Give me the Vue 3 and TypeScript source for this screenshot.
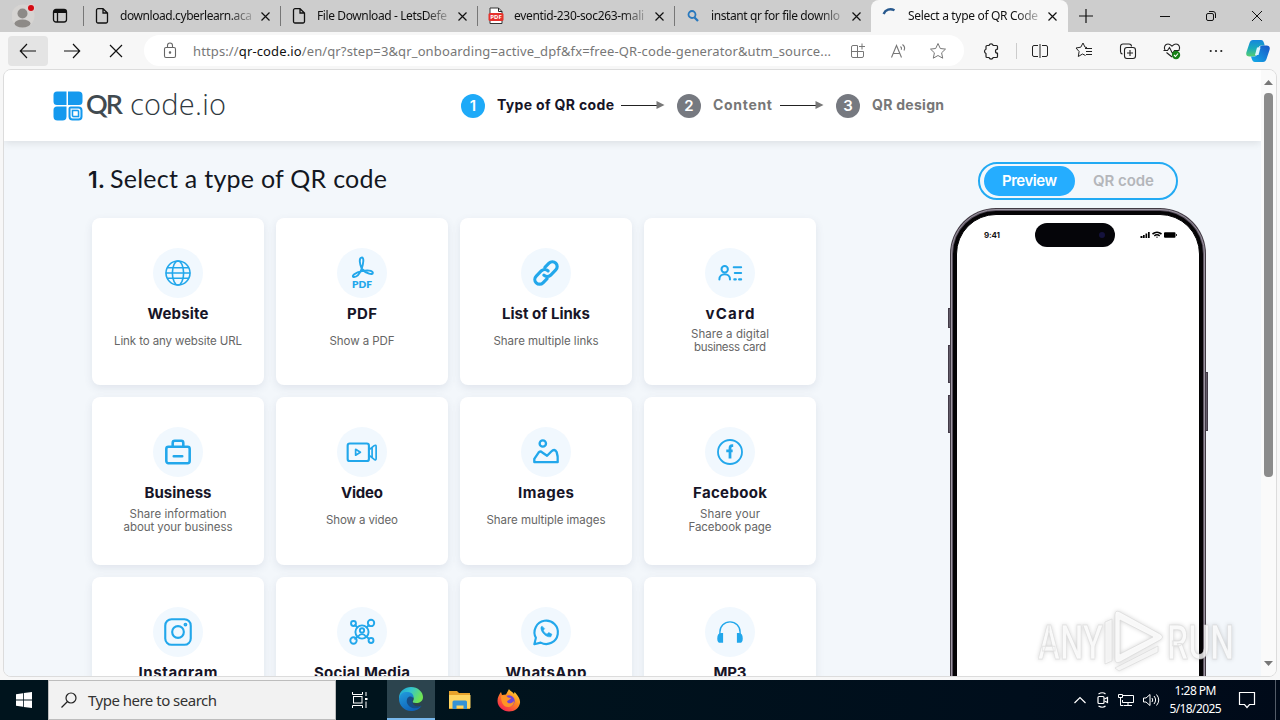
<script setup lang="ts">
import type { Directive } from 'vue'

interface Tab {
  title: string
  width: number
  icon: 'page' | 'pdf' | 'search' | 'spinner'
  active?: boolean
}

interface QrType {
  name: string
  nameWidth: number
  lines: { text: string; width: number }[]
  icon: string
}

// Tracks a label so that it takes up exactly the given width.
const vFit: Directive<HTMLElement, number> = {
  mounted(el, { value }) {
    const count = (el.textContent ?? '').length
    const natural = el.getBoundingClientRect().width
    const spacing = (value - natural) / Math.max(1, count - 1)
    el.style.letterSpacing = `${spacing}px`
    el.style.marginRight = `${-spacing}px`
  },
}

const tabs: Tab[] = [
  { title: 'download.cyberlearn.aca', width: 132, icon: 'page' },
  { title: 'File Download - LetsDefe', width: 130, icon: 'page' },
  { title: 'eventid-230-soc263-mali', width: 130, icon: 'pdf' },
  { title: 'instant qr for file downlo', width: 129, icon: 'search' },
  { title: 'Select a type of QR Code', width: 130, icon: 'spinner', active: true },
]

const types: QrType[] = [
  { name: 'Website', nameWidth: 61, lines: [{ text: 'Link to any website URL', width: 128 }], icon: 'globe' },
  { name: 'PDF', nameWidth: 30, lines: [{ text: 'Show a PDF', width: 65 }], icon: 'pdf' },
  { name: 'List of Links', nameWidth: 88, lines: [{ text: 'Share multiple links', width: 105 }], icon: 'link' },
  { name: 'vCard', nameWidth: 49, lines: [{ text: 'Share a digital', width: 78 }, { text: 'business card', width: 72 }], icon: 'vcard' },
  { name: 'Business', nameWidth: 67, lines: [{ text: 'Share information', width: 97 }, { text: 'about your business', width: 109 }], icon: 'business' },
  { name: 'Video', nameWidth: 42, lines: [{ text: 'Show a video', width: 72 }], icon: 'video' },
  { name: 'Images', nameWidth: 56, lines: [{ text: 'Share multiple images', width: 119 }], icon: 'images' },
  { name: 'Facebook', nameWidth: 74, lines: [{ text: 'Share your', width: 60 }, { text: 'Facebook page', width: 83 }], icon: 'facebook' },
  { name: 'Instagram', nameWidth: 79, lines: [], icon: 'instagram' },
  { name: 'Social Media', nameWidth: 96, lines: [], icon: 'social' },
  { name: 'WhatsApp', nameWidth: 81, lines: [], icon: 'whatsapp' },
  { name: 'MP3', nameWidth: 33, lines: [], icon: 'mp3' },
]
</script>

<template>
  <div class="desktop">
    <header class="tabbar">
      <div class="profile">
        <svg width="24" height="28" viewBox="0 0 24 28">
          <circle cx="11" cy="15" r="11.5" fill="#d6d4d2" />
          <circle cx="10.500" cy="12.500" r="5" fill="#8d8a87" />
          <ellipse cx="10.500" cy="22.500" rx="8" ry="4" fill="#8d8a87" />
          <circle cx="19" cy="7" r="4" fill="#e2cfcf" />
          <circle cx="19" cy="7" r="3" fill="#d40a12" />
        </svg>
      </div>
      <div class="workspaces">
        <svg width="16" height="16" viewBox="0 0 16 16" fill="none" stroke="#111" stroke-width="1.3">
          <rect x="1.500" y="1.500" width="13" height="12.500" rx="2.500" />
          <path d="M2 3.500h12" stroke-width="3" />
          <path d="M5.500 4v10" />
        </svg>
      </div>
      <div v-for="tab in tabs" :key="tab.title" class="tab" :class="{ active: tab.active }">
        <span class="tab-icon">
          <svg v-if="tab.icon === 'page'" width="14" height="18" viewBox="0 0 14 18" fill="none" stroke="#111" stroke-width="1.3">
            <path d="M3 1.700h5L12.500 6v8.500a1.500 1.500 0 0 1-1.500 1.500H3a1.500 1.500 0 0 1-1.500-1.500V3.200A1.500 1.500 0 0 1 3 1.700zM8 1.700V6h4.500" />
          </svg>
          <svg v-else-if="tab.icon === 'pdf'" class="pdf-tab" width="16" height="18" viewBox="0 0 16 18">
            <path d="M2 1h8.500L14 4.500V16.500H2z" fill="#fff" stroke="#333" />
            <path d="M10.500 1v3.500H14" fill="none" stroke="#222" />
            <rect x="0.500" y="6" width="15" height="8" rx="1.500" fill="#e5322d" />
            <text x="8" y="12.200" text-anchor="middle" font-size="6" font-weight="700" fill="#fff">PDF</text>
          </svg>
          <svg v-else-if="tab.icon === 'search'" width="14" height="16" viewBox="0 0 14 16" fill="none" stroke="#2878bd">
            <circle cx="6" cy="6.500" r="3.500" stroke-width="1.800" />
            <path d="M8.500 9.500l3.500 3.500" stroke-width="2.300" />
          </svg>
          <svg v-else width="16" height="16" viewBox="0 0 16 16" fill="none" stroke="#28598e" stroke-width="2.400">
            <path d="M1.600 6C3.500 1.500 8 0 12.500 2.300" />
          </svg>
        </span>
        <span class="tab-title"><span v-fit="tab.width" class="fit">{{ tab.title }}</span></span>
        <svg class="tab-close" width="9" height="9" viewBox="0 0 9 9" stroke="#111" stroke-width="1.200">
          <path d="M.500 .500l8 8M8.500 .500l-8 8" />
        </svg>
      </div>
      <svg class="new-tab" width="14" height="14" viewBox="0 0 14 14" stroke="#111" stroke-width="1.200"><path d="M7 0v14M0 7h14" /></svg>
      <div class="window-buttons">
        <svg width="12" height="12" viewBox="0 0 12 12" stroke="#111"><path d="M1 6.500h10" /></svg>
        <svg width="12" height="12" viewBox="0 0 12 12" fill="none" stroke="#111">
          <rect x="1.500" y="3.500" width="7" height="7" rx="1.500" /><path d="M4 1.500h4a2.500 2.500 0 0 1 2.500 2.500v4" />
        </svg>
        <svg width="12" height="12" viewBox="0 0 12 12" stroke="#111"><path d="M1 1l10 10M11 1L1 11" /></svg>
      </div>
    </header>

    <nav class="toolbar">
      <button class="nav back">
        <svg width="18" height="16" viewBox="0 0 18 16" fill="none" stroke="#111" stroke-width="1.200"><path d="M17 8H1.500M8 1L1.300 8 8 15" /></svg>
      </button>
      <button class="nav">
        <svg width="18" height="16" viewBox="0 0 18 16" fill="none" stroke="#111" stroke-width="1.200"><path d="M1 8h15.500M10 1l6.700 7L10 15" /></svg>
      </button>
      <button class="nav">
        <svg width="14" height="14" viewBox="0 0 14 14" stroke="#111" stroke-width="1.200"><path d="M1 1l12 12M13 1L1 13" /></svg>
      </button>
      <div class="address">
        <svg class="lock" width="14" height="17" viewBox="0 0 14 17" fill="none" stroke="#666" stroke-width="1.100">
          <rect x="1.500" y="5.500" width="11" height="10" rx="1.500" /><path d="M4.500 5.500V3.500a2.500 2.500 0 0 1 5 0v2" /><circle cx="7" cy="10.500" r=".700" fill="#444" />
        </svg>
        <div class="url"><span v-fit="638" class="fit">https://<b>qr-code.io</b>/en/qr?step=3&amp;qr_onboarding=active_dpf&amp;fx=free-QR-code-generator&amp;utm_source...</span></div>
        <div class="address-icons">
          <svg width="16" height="16" viewBox="0 0 16 16" fill="none" stroke="#777">
            <path d="M7.500 2.500H3A1.500 1.500 0 0 0 1.500 4v9A1.500 1.500 0 0 0 3 14.500h9A1.500 1.500 0 0 0 13.500 13V8.500H1.500M7.500 2.500v12M12 .500v6M9 3.500h6" />
          </svg>
          <svg width="18" height="16" viewBox="0 0 18 16" fill="none" stroke="#777" stroke-width="1.100">
            <path d="M1.500 14.500L6.500 2.500l5 12M3 10.500h7M10.500 3.500c1 .800 1.300 2 .800 3.300M12.500 1.500c2 1.500 2.500 4 1.500 6" />
          </svg>
          <svg width="18" height="18" viewBox="0 0 18 18" fill="none" stroke="#777"><path d="M9 1.500l2.300 5 5.200.600-3.900 3.700 1.100 5.400L9 13.500l-4.700 2.700 1.100-5.400L1.500 7.100l5.200-.600z" /></svg>
        </div>
      </div>
      <div class="tool">
        <svg width="18" height="18" viewBox="0 0 18 18" fill="none" stroke="#222" stroke-width="1.200" stroke-linejoin="round">
          <path d="M6 3.500a2.200 2.200 0 0 1 4.200 0h3.300q1 0 1 1v2.700a2 2 0 0 0 0 4v3.300q0 1-1 1h-3.300a2.200 2.200 0 0 1-4.200 0H4q-1 0-1-1v-3a2.300 2.300 0 0 1 0-4.300V4.500q0-1 1-1z" />
        </svg>
      </div>
      <span class="divider"></span>
      <div class="tool">
        <svg width="16" height="16" viewBox="0 0 16 16" fill="none" stroke="#222"><path d="M6 2.500H2A1.500 1.500 0 0 0 .500 4v8A1.500 1.500 0 0 0 2 13.500h4M10 2.500h4A1.500 1.500 0 0 1 15.500 4v8a1.500 1.500 0 0 1-1.500 1.500h-4M8 1v14" /></svg>
      </div>
      <div class="tool">
        <svg width="18" height="18" viewBox="0 0 18 18" fill="none" stroke="#222"><path d="M10.500 13.500l-3-1.500-4.200 2.500.800-5L1 6l4.800-.800L8 1l2 4.200 2 .300M10 6.500h7M11 9.500h6M11 12.500h6" /></svg>
      </div>
      <div class="tool">
        <svg width="18" height="18" viewBox="0 0 18 18" fill="none" stroke="#222" stroke-width="1.100">
          <path d="M3.500 12A2.500 2.500 0 0 1 1.500 9.500v-5A2.500 2.500 0 0 1 4 2h6a2.500 2.500 0 0 1 2.500 2.500" /><rect x="5.500" y="5.500" width="11" height="11" rx="2.500" /><path d="M11 8v6M8 11h6" />
        </svg>
      </div>
      <div class="tool">
        <svg width="18" height="18" viewBox="0 0 18 18" fill="none" stroke="#222" stroke-width="1.100">
          <path d="M2 8C.500 5.500 2 2 5 2c2 0 3 1.200 4 2.200C10 3.200 11 2 13 2c3 0 4.500 3.500 3 6M.500 8.500h4l2-3 3 6 2-3h5M3.500 10.500L9 15" />
          <circle cx="13" cy="13" r="4.200" fill="#168016" stroke="none" /><path d="M11 13l1.500 1.500 2.500-3" stroke="#fff" />
        </svg>
      </div>
      <div class="tool">
        <svg width="14" height="4" viewBox="0 0 14 4" fill="#222"><circle cx="1.700" cy="2" r="1.100" /><circle cx="7" cy="2" r="1.100" /><circle cx="12.300" cy="2" r="1.100" /></svg>
      </div>
      <div class="tool copilot">
        <svg width="24" height="24" viewBox="0 0 24 24">
          <defs>
            <linearGradient id="cop-a" x1="0" y1="0" x2="0" y2="1"><stop offset="0" stop-color="#1686de" /><stop offset=".500" stop-color="#19aabc" /><stop offset="1" stop-color="#58ce70" /></linearGradient>
            <linearGradient id="cop-b" x1="0" y1="1" x2="1" y2="0"><stop offset="0" stop-color="#12aee8" /><stop offset="1" stop-color="#1955c7" /></linearGradient>
          </defs>
          <path d="M7 1h8c2 0 2.500 1.500 3 3l.700 2.500h-3c-2 0-3 1-3.600 3L10.500 15c-.600 1.700-1.500 2.500-3 2.500H3.500C.500 17.500-.300 15.500.500 13L3.500 4C4.200 2 5.200 1 7 1z" fill="url(#cop-a)" />
          <path d="M17 23H9c-2 0-2.700-1.500-3.200-3L5 17.500h3c2 0 3-1 3.600-3L13.500 9c.600-1.700 1.500-2.500 3-2.500h4c3 0 3.800 2 3 4.500l-3 9c-.700 2-1.700 3-3.500 3z" fill="url(#cop-b)" />
          <path d="M11 8.500h3.500L12.500 16H9z" fill="#dff5ff" />
        </svg>
      </div>
    </nav>

    <main class="frame">
      <div class="page">
        <div class="site-header">
          <div class="logo">
            <svg width="30" height="30" viewBox="0 0 30 30">
              <path d="M4 .500h9.500V14H4a3.500 3.500 0 0 1-3.500-3.500V4A3.500 3.500 0 0 1 4 .500zM15 .500h10.500A4 4 0 0 1 29.500 4.500v6A3.500 3.500 0 0 1 26 14H15zM4 15.500h9.500v10a4 4 0 0 1-4 4H4.500a4 4 0 0 1-4-4V19A3.500 3.500 0 0 1 4 15.500z" fill="#1499ee" />
              <path d="M17.500 16.500h8a3 3 0 0 1 3 3v6a3 3 0 0 1-3 3h-6a3 3 0 0 1-3-3v-8a1 1 0 0 1 1-1z" fill="#e6f5ff" stroke="#1499ee" stroke-width="2" />
              <path d="M19.500 19.500h5a1 1 0 0 1 1 1v5h-5a1 1 0 0 1-1-1z" fill="#fff" stroke="#1499ee" stroke-width="1.500" />
            </svg>
            <span v-fit="37" class="fit logo-strong">QR</span>
            <span v-fit="96" class="fit logo-light">code.io</span>
          </div>
          <div class="steps">
            <span class="step-no current">1</span><span class="step-name s1"><span v-fit="117" class="fit">Type of QR code</span></span>
            <svg class="arrow" width="44" height="10" viewBox="0 0 44 10"><path d="M0 5.500h37" stroke="#222" /><path d="M35.500 1v8L43.500 5z" fill="#777" /></svg>
            <span class="step-no">2</span><span class="step-name s2"><span v-fit="59" class="fit">Content</span></span>
            <svg class="arrow" width="44" height="10" viewBox="0 0 44 10"><path d="M0 5.500h37" stroke="#222" /><path d="M35.500 1v8L43.500 5z" fill="#777" /></svg>
            <span class="step-no">3</span><span class="step-name"><span v-fit="72" class="fit">QR design</span></span>
          </div>
        </div>

        <div class="body">
          <section class="chooser">
            <h1><b>1.</b><span v-fit="277" class="fit">Select a type of QR code</span></h1>
            <div class="grid">
              <article v-for="item in types" :key="item.name" class="card">
                <div class="bubble">
                  <svg width="32" height="32" viewBox="0 0 32 32" fill="none" stroke="#22a7eb" stroke-width="1.700" stroke-linecap="round" stroke-linejoin="round">
                    <g v-if="item.icon === 'globe'" stroke-width="1.500">
                      <circle cx="16" cy="16" r="11.300" /><ellipse cx="16" cy="16" rx="5.300" ry="11.300" /><path d="M5 16h22M6.500 11h19M6.500 21h19" />
                    </g>
                    <g v-else-if="item.icon === 'pdf'">
                      <path d="M15.700 12C14 8 12.800 2 15.500 1.500c2.800-.500 1.800 5.500.200 10.500-1.500 4-4.500 8-7.500 7.800-2.800-.800 1.500-4.300 7.800-5.600 5-1 9.800-.700 10.200 1.600.200 2.500-6.200 1-10.500-3.800z" stroke-width="1.800" />
                      <text x="16" y="30.500" text-anchor="middle" font-size="9.500" font-weight="800" fill="#22a7eb" stroke="none">PDF</text>
                    </g>
                    <g v-else-if="item.icon === 'link'" transform="rotate(-45 16 16)" stroke-width="3">
                      <path d="M13 20.500H7.500a4.500 4.500 0 0 1 0-9h7a4.500 4.500 0 0 1 4.300 4.500M19 11.500h5.500a4.500 4.500 0 0 1 0 9h-7a4.500 4.500 0 0 1-4.300-4.500" />
                    </g>
                    <g v-else-if="item.icon === 'vcard'" stroke-width="1.900">
                      <circle cx="11" cy="12.500" r="3" /><path d="M6 22c0-6.500 10-6.500 10 0M19.500 10.500h7M20.500 16h6M20 22h1.500M24.500 22h2" />
                    </g>
                    <g v-else-if="item.icon === 'business'" stroke-width="2.400">
                      <rect x="5" y="11" width="22" height="15.500" rx="2" /><path d="M11 11V7.500a2 2 0 0 1 2-2h6a2 2 0 0 1 2 2v3.500M12 20h8" />
                    </g>
                    <g v-else-if="item.icon === 'video'" stroke-width="2">
                      <rect x="2.500" y="8" width="20" height="16.500" rx="2" /><path d="M22.500 14l5-4q1.800-1 1.800 1v11q0 2-1.800 1l-5-4M25.500 12v9M10 13.500v5.500l4.500-2.800z" stroke-width="1.600" />
                    </g>
                    <g v-else-if="item.icon === 'images'" stroke-width="2.200">
                      <circle cx="13" cy="8" r="3" /><path d="M5 25.500v-3l4-6q1.500-2 3.500 0l4.500 3 4-4q3-3 5 .500 1.500 4 1 9.500z" />
                    </g>
                    <g v-else-if="item.icon === 'facebook'">
                      <circle cx="16" cy="16" r="11.300" /><path d="M19 10h-1q-2 0-2 2.500V22M12.500 15h6" stroke-width="2.600" stroke-linecap="butt" />
                    </g>
                    <g v-else-if="item.icon === 'instagram'" stroke-width="2">
                      <rect x="4" y="4" width="24" height="24" rx="6" /><circle cx="16" cy="16" r="5.500" /><circle cx="23" cy="9" r=".800" />
                    </g>
                    <g v-else-if="item.icon === 'social'" stroke-width="1.800">
                      <circle cx="16" cy="16" r="6.200" /><circle cx="16" cy="14.500" r="2" /><path d="M12 20.500q4-5 8 0M9.500 9.500l2 2M22.500 9.500l-2 2M9.500 22.500l2-2M22.500 22.500l-2-2" />
                      <circle cx="8" cy="8" r="2.300" /><circle cx="24.500" cy="7.500" r="3" /><circle cx="8" cy="24" r="3" /><circle cx="24.500" cy="24" r="2.300" />
                    </g>
                    <g v-else-if="item.icon === 'whatsapp'" stroke-width="2">
                      <path d="M5 27.500l1.500-6A11 11 0 1 1 11 26z" /><path d="M12 10.500c-3 2 2.500 11 8.500 10l1-2.500-3-1.500-1.500 1.500c-2-1-3-2-3.500-3.500l1-1.500z" fill="#22a7eb" stroke-width=".600" />
                    </g>
                    <g v-else>
                      <path d="M6.500 20v-4a9.500 9.500 0 0 1 19 0v4" stroke-width="1.300" /><path d="M8 17q-4 0-4 5t4 4h1.500v-9zM24 17q4 0 4 5t-4 4h-1.500v-9z" fill="#22a7eb" stroke="none" />
                    </g>
                  </svg>
                </div>
                <h2><span v-fit="item.nameWidth" class="fit">{{ item.name }}</span></h2>
                <div class="desc">
                  <div v-for="line in item.lines" :key="line.text"><span v-fit="line.width" class="fit">{{ line.text }}</span></div>
                </div>
              </article>
            </div>
          </section>

          <aside class="preview">
            <div class="toggle">
              <span class="toggle-on"><span v-fit="55" class="fit">Preview</span></span>
              <span class="toggle-off"><span v-fit="61" class="fit">QR code</span></span>
            </div>
            <div class="phone">
              <i class="key k1"></i><i class="key k2"></i><i class="key k3"></i><i class="key k4"></i>
              <div class="bezel">
                <div class="screen">
                  <span class="clock-text"><span v-fit="16" class="fit">9:41</span></span>
                  <span class="island"><i></i></span>
                  <svg width="38" height="8" viewBox="0 0 38 8">
                    <path d="M.500 5h2v2h-2zM3 4h1.700v3H3zM5.500 2.500h1.700V7H5.500zM8 1h1.700v6H8zM25 1.200h9.500a1 1 0 0 1 1 1v3.600a1 1 0 0 1-1 1H25a1 1 0 0 1-1-1V2.200a1 1 0 0 1 1-1zM36.200 3h.800v2h-.800z" fill="#000" />
                    <path d="M12.500 3q4.500-3.500 9 0M14.300 4.800q2.700-2 5.400 0" fill="none" stroke="#000" stroke-width="1.600" /><path d="M15.800 5.700h2.400L17 7z" />
                  </svg>
                </div>
              </div>
            </div>
          </aside>
        </div>
      </div>
      <div class="scrollbar">
        <svg width="9" height="5" viewBox="0 0 9 5"><path d="M0 5h9L4.500 0z" fill="#777" /></svg>
        <span class="thumb"></span>
        <svg class="down" width="9" height="5" viewBox="0 0 9 5"><path d="M0 0h9L4.500 5z" fill="#777" /></svg>
      </div>
    </main>

    <footer class="taskbar">
      <div class="start">
        <svg width="16" height="16" viewBox="0 0 16 16" fill="#fff"><path d="M0 2.200L7 1.200v6.300H0zM7.800 1.100L16 0v7.500H7.800zM0 8.400h7v6.400l-7-1zM7.800 8.400H16V16l-8.200-1.100z" /></svg>
      </div>
      <div class="search">
        <svg width="16" height="16" viewBox="0 0 16 16" fill="none" stroke="#222" stroke-width="1.200"><circle cx="10" cy="6" r="5" /><path d="M6.500 9.500L.500 15.500" /></svg>
        <span v-fit="129" class="fit">Type here to search</span>
      </div>
      <div class="task">
        <svg width="16" height="16" viewBox="0 0 16 16" fill="none" stroke="#fff"><path d="M.500 0v2.500h10V0M.500 16v-2.500h10V16M14 0v4M14 9.500V16" /><rect x="1.500" y="4.500" width="8.500" height="6.500" /><path d="M13 6h2.500v2H13z" fill="#fff" stroke="none" /></svg>
      </div>
      <div class="task running">
        <svg width="24" height="24" viewBox="0 0 24 24">
          <defs>
            <linearGradient id="edge-a" x1="0" y1="0" x2="1" y2=".400"><stop offset="0" stop-color="#1aa1d5" /><stop offset=".500" stop-color="#35c5cc" /><stop offset="1" stop-color="#6fe454" /></linearGradient>
            <linearGradient id="edge-b" x1="0" y1="0" x2=".600" y2="1"><stop offset="0" stop-color="#229ddd" /><stop offset="1" stop-color="#0f61b7" /></linearGradient>
          </defs>
          <path d="M0 11C0 4 6 0 12 0c7 0 12 5 12 10 0 4-3 6-7 6-3 0-4-1-3-2 2-3 0-6-4-6C5 8 0 9 0 14z" fill="url(#edge-a)" />
          <path d="M0 12C1 6 5 4.500 9 5c4 .500 6 3 5.500 6-5-2-8 6 1 9 3 .800 5 0 7-1-2 3-6 5-10.500 5C5 24 0 18 0 12z" fill="url(#edge-b)" />
          <path d="M8.500 11c-2 4 0 8 5 10 4 1 7-.500 9-2.500-5 2-9 0-9-3.500-1-1 1-3 0-5-2-1-4-.500-5 1z" fill="#174d85" />
        </svg>
      </div>
      <div class="task">
        <svg width="22" height="20" viewBox="0 0 22 20"><path d="M0 1h8l2 2h11v16H0z" fill="#e8a32b" /><path d="M0 5h21.500v13H0z" fill="#ffd561" /><path d="M3.500 19v-7q0-1.500 1.500-1.500h11.500q1.500 0 1.500 1.500v7h-3.500v-3.500h-7V19z" fill="#3592d5" /></svg>
      </div>
      <div class="task">
        <svg width="24" height="24" viewBox="0 0 24 24">
          <defs><linearGradient id="fox" x1=".900" y1="0" x2=".200" y2="1"><stop offset="0" stop-color="#ffe33d" /><stop offset=".450" stop-color="#ff8a20" /><stop offset="1" stop-color="#f51c55" /></linearGradient></defs>
          <path d="M4 4l1 3 4-.500L12 1c1 2 3 2 5 5l.500-2c3 3 6 7 5.500 11-.800 5-5.500 8.500-11 8.500S.500 19 .500 13C.500 9 2 7 4 4z" fill="url(#fox)" />
          <circle cx="12" cy="13" r="5.700" fill="#7045d8" /><path d="M4 8c3-2 6 0 7 1.500l3 .500c-1 2-3 2-4 3.500 1 3 5 2 7-.500 0 4-3 6-6 6-5 0-7-5-7-11z" fill="#ff9426" />
        </svg>
      </div>
      <div class="tray">
        <svg width="12" height="8" viewBox="0 0 12 8" fill="none" stroke="#fff" stroke-width="1.200"><path d="M.500 7L6 1.500 11.500 7" /></svg>
        <svg width="14" height="16" viewBox="0 0 14 16" fill="none" stroke="#fff" stroke-width="1.200"><rect x="3" y="4.500" width="6" height="7" rx="1" /><path d="M9.500 7l3-1.500v5l-3-1.500M3.500 2q4-2.500 7 0M3.500 14q4 2.500 7 0" /></svg>
        <svg width="16" height="14" viewBox="0 0 16 14" fill="none" stroke="#fff"><path d="M5 2.500h10.500v7H4.500V7M10 9.500v3M6 12.500h8M.500 1.500h4v3h-4zM2.500 4.500v8h3" /></svg>
        <svg width="17" height="14" viewBox="0 0 17 14" fill="none" stroke="#fff"><path d="M.500 5v4H3l4 3.500v-11L3 5zM9 5q1.500 2 0 4M11 3q3.200 4 0 8M13.500 1.500q4.500 5.500 0 11" /></svg>
      </div>
      <div class="time">
        <div><span v-fit="42" class="fit">1:28 PM</span></div>
        <div><span v-fit="52" class="fit">5/18/2025</span></div>
      </div>
      <svg class="note" width="18" height="18" viewBox="0 0 18 18" fill="none" stroke="#fff" stroke-width="1.200"><path d="M1.500 1.500h15v12h-5L9 16.500l-2.500-3h-5z" /></svg>
      <span class="peek"></span>
    </footer>

    <svg class="watermark" width="204" height="72" viewBox="0 0 204 72">
      <g fill="#fff" fill-opacity=".8" stroke="#d0d0d0" stroke-opacity=".5" stroke-width="1">
        <text x="6" y="52" textLength="65" lengthAdjust="spacingAndGlyphs">ANY</text>
        <text x="135" y="52" textLength="67" lengthAdjust="spacingAndGlyphs">RUN</text>
        <path fill-rule="evenodd" d="M88 5q-5-2.500-5 3v44q0 5 5 3l40-22q5-3 0-6zM88 13v34l33-17z" />
        <path d="M80 12l-7 3v42l7-3zM83 61l43-22v6L87 64z" fill-opacity=".5" />
      </g>
    </svg>
  </div>
</template>

<style>
body { margin: 0; overflow: hidden; }
</style>

<style scoped>
* { box-sizing: border-box; }
svg { display: block; flex: none; }
.desktop { position: relative; width: 1280px; height: 720px; overflow: hidden; display: flex; flex-direction: column; background: #f7f7f7; font-family: "Noto Sans", "Open Sans", sans-serif; color: #111; }
.fit { display: inline-block; white-space: nowrap; }

.tabbar { height: 32px; flex: none; display: flex; align-items: center; background: #cdcdcd; }
.profile { width: 44px; padding-left: 12px; padding-bottom: 2px; }
.workspaces { width: 39px; padding-left: 8px; }
.tab { width: 197px; height: 32px; padding: 0 10px 0 12px; display: flex; align-items: center; position: relative; }
.tab::before { content: ""; position: absolute; left: 0; top: 6px; height: 20px; width: 1px; background: #777; }
.tab.active { background: #f7f7f7; border-radius: 8px 8px 0 0; }
.tab.active::before { display: none; }
.tab-icon { width: 25px; display: flex; }
.pdf-tab { margin-left: -1px; }
.tab-title { width: 136px; font-size: 12px; line-height: 18px; -webkit-mask-image: linear-gradient(90deg, #000 108px, transparent 138px); }
.tab-close { margin-left: 5px; }
.tab.active .tab-icon { margin-left: -1px; width: 26px; }
.tab.active .tab-close { margin-left: 4px; }
.new-tab { margin-left: 11px; }
.window-buttons { flex: 1; display: flex; justify-content: flex-end; gap: 34px; padding-right: 17px; }

.toolbar { height: 37px; flex: none; display: flex; align-items: center; padding: 0 0 0 8px; background: #f7f7f7; }
.nav { width: 40px; height: 30px; margin-right: 4px; padding: 0; border: 0; border-radius: 4px; background: none; display: flex; align-items: center; justify-content: center; }
.nav.back { background: #e4e4e4; }
.address { width: 820px; height: 31px; margin: 0 6px 0 4px; padding: 0 17px 0 19px; border-radius: 16px; background: #fff; display: flex; align-items: center; }
.url { margin-left: 16px; font-size: 13px; line-height: 20px; color: #777; flex: 1; }
.url b { font-weight: 400; color: #111; }
.address-icons { display: flex; gap: 21px; align-items: center; }
.address-icons svg:first-child { margin-right: 3px; }
.tool { width: 44px; display: flex; justify-content: center; }
.divider { width: 1px; height: 16px; margin: 0 1px 0 2px; background: #ccc; }
.copilot { width: 40px; }

.frame { height: 608px; flex: none; margin: 0 3px; border: 1px solid #dcdcdc; border-radius: 8px; overflow: hidden; display: flex; background: #fafafa; }
.page { width: 1257px; height: 606px; overflow: hidden; background: #f3f7fb; font-family: Lato, "Liberation Sans", sans-serif; }
.site-header { position: relative; height: 71px; background: #fff; box-shadow: 0 2px 8px rgba(0, 0, 0, .1); display: flex; align-items: center; }
.logo { width: 457px; height: 36px; padding-left: 49px; display: flex; align-items: center; color: #414a50; font-size: 27px; line-height: 34px; }
.logo-strong { margin: -4px 0 0 3px; font-weight: 600; }
.logo-light { margin: -4px 0 0 7px; font-family: "Open Sans", sans-serif; font-weight: 300; font-size: 29px; color: #30393f; }
.steps { display: flex; align-items: center; font-family: Inter, sans-serif; }
.step-no { width: 24px; height: 24px; border-radius: 50%; background: #767980; color: #fff; font-weight: 600; font-size: 15px; line-height: 24px; text-align: center; }
.step-no.current { background: #1eaaf8; }
.step-no.current + .step-name { color: #171527; }
.step-name { margin: -1px 0 0 12px; font-size: 14px; line-height: 20px; font-weight: 700; color: #777; }
.s1 { width: 124px; }
.s2 { width: 67px; }
.arrow { margin: -1px 12px 0 0; }

.body { display: flex; }
.chooser { width: 812px; padding: 21px 0 0 88px; }
h1 { height: 32px; margin: 0 0 23.750px -4px; display: flex; align-items: baseline; font-size: 25px; line-height: 32px; font-weight: 400; color: #131722; }
h1 b { flex: none; width: 22px; font-family: Inter, sans-serif; font-size: 23px; font-weight: 600; }
.grid { display: grid; grid-template-columns: repeat(4, 172px); grid-auto-rows: 167.500px; gap: 12px; }
.card { border-radius: 8px; background: #fff; box-shadow: 0 3px 8px rgba(70, 80, 120, .11); padding-top: 30px; display: flex; flex-direction: column; align-items: center; }
.bubble { width: 50px; height: 50px; border-radius: 50%; background: #f1f8fe; display: flex; align-items: center; justify-content: center; }
.bubble svg { width: 34px; height: 34px; }
h2 { margin: 5px 0 0; font-family: Inter, sans-serif; font-size: 15px; line-height: 22px; font-weight: 700; color: #171527; }
.desc { height: 33px; display: flex; flex-direction: column; justify-content: center; align-items: center; font-family: Inter, sans-serif; font-size: 11.500px; line-height: 13px; color: #666; }

.preview { width: 262px; margin-left: 131px; padding-top: 21px; display: flex; flex-direction: column; align-items: center; font-family: Inter, sans-serif; }
.toggle { width: 200px; height: 38px; border: 2px solid #22aaf3; border-radius: 19px; padding: 2px 4px; display: flex; align-items: center; font-size: 15px; font-weight: 600; }
.toggle-on { width: 91px; height: 30px; border-radius: 15px; background: #25adff; color: #fff; line-height: 30px; display: flex; justify-content: center; }
.toggle-off { flex: 1; color: #b4b6ba; line-height: 30px; display: flex; justify-content: center; }
.phone { position: relative; margin-top: 8px; width: 256px; height: 560px; padding: 1px; border-radius: 46px; background: #413a43; }
.bezel { height: 100%; padding: 3px; border: 2px solid #5b5360; outline: 1px solid #9b94a0; outline-offset: -1px; border-radius: 45px; background: #050406; }
.phone .screen { height: 100%; border: 1px solid #050406; border-radius: 40px; background: #fff; display: flex; align-items: flex-start; padding: 8px 0 0 27px; }
.clock-text { width: 51px; font-size: 8px; font-weight: 700; line-height: 12px; margin-top: 6px; }
.island { width: 80px; height: 24px; border-radius: 12px; background: #050509; display: flex; align-items: center; justify-content: flex-end; padding-right: 10px; }
.island i { width: 6px; height: 6px; border-radius: 50%; background: #14123c; }
.screen svg { margin: 8px 0 0 25px; }
.key { position: absolute; left: -2px; width: 3px; background: #625b68; border: 1px solid #413a46; }
.k1 { top: 100px; height: 20px; }
.k2 { top: 137px; height: 38px; }
.k3 { top: 187px; height: 38px; }
.k4 { left: auto; right: -2px; top: 164px; height: 59px; }

.scrollbar { width: 15px; padding: 10px 1px 10px 0; display: flex; flex-direction: column; align-items: center; background: #fafafa; }
.thumb { width: 9px; height: 384px; margin-top: 8px; border-radius: 4px; background: #8b8b8b; }
.down { margin-top: auto; }

.taskbar { height: 40px; margin-top: 3px; flex: none; display: flex; align-items: center; background: linear-gradient(90deg, #00141d 30%, #000e1c 80%, #000a19); color: #fff; }
.start { width: 48px; display: flex; justify-content: center; }
.search { width: 288px; height: 40px; padding-left: 12px; display: flex; align-items: center; gap: 11px; background: #f2f2f2; border: 1px solid #bdbdbd; color: #333; font-size: 15px; }
.task { width: 49px; height: 40px; display: flex; align-items: center; justify-content: center; }
.task:nth-child(3) { width: 51px; padding-right: 4px; }
.running { width: 48px; background: #2c444e; border-bottom: 2px solid #78b8ec; }
.tray { margin-left: auto; display: flex; align-items: center; gap: 9px; }
.time { width: 71px; font-size: 12px; line-height: 18px; text-align: center; }
.note { margin: 0 19px 0 7px; }
.peek { width: 5px; height: 40px; border-left: 1px solid #535c68; }

.watermark { position: absolute; left: 1032px; top: 607px; font-family: Roboto, sans-serif; font-size: 49px; font-weight: 500; filter: drop-shadow(0 0 2px rgba(0, 0, 0, .2)); }
</style>
